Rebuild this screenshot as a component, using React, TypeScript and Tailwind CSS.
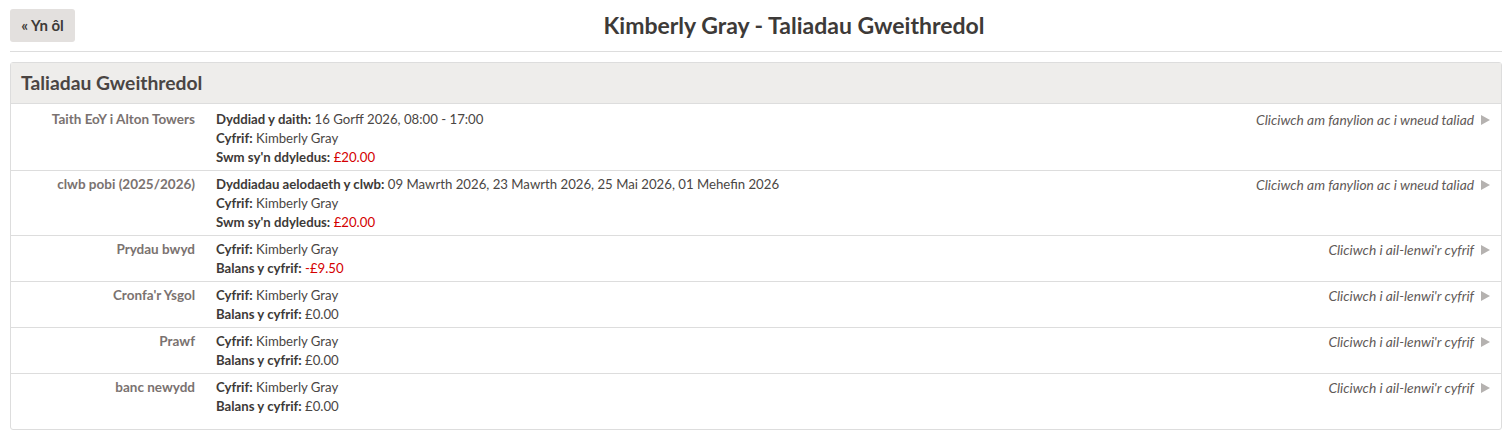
const rows = [
  {
    name: 'Taith EoY i Alton Towers',
    lines: [
      { label: 'Dyddiad y daith:', value: '16 Gorff 2026, 08:00 - 17:00' },
      { label: 'Cyfrif:', value: 'Kimberly Gray' },
      { label: "Swm sy'n ddyledus:", value: '£20.00', red: true },
    ],
    action: 'Cliciwch am fanylion ac i wneud taliad',
  },
  {
    name: 'clwb pobi (2025/2026)',
    lines: [
      {
        label: 'Dyddiadau aelodaeth y clwb:',
        value: '09 Mawrth 2026, 23 Mawrth 2026, 25 Mai 2026, 01 Mehefin 2026',
      },
      { label: 'Cyfrif:', value: 'Kimberly Gray' },
      { label: "Swm sy'n ddyledus:", value: '£20.00', red: true },
    ],
    action: 'Cliciwch am fanylion ac i wneud taliad',
  },
  {
    name: 'Prydau bwyd',
    lines: [
      { label: 'Cyfrif:', value: 'Kimberly Gray' },
      { label: 'Balans y cyfrif:', value: '-£9.50', red: true },
    ],
    action: "Cliciwch i ail-lenwi'r cyfrif",
  },
  {
    name: "Cronfa'r Ysgol",
    lines: [
      { label: 'Cyfrif:', value: 'Kimberly Gray' },
      { label: 'Balans y cyfrif:', value: '£0.00' },
    ],
    action: "Cliciwch i ail-lenwi'r cyfrif",
  },
  {
    name: 'Prawf',
    lines: [
      { label: 'Cyfrif:', value: 'Kimberly Gray' },
      { label: 'Balans y cyfrif:', value: '£0.00' },
    ],
    action: "Cliciwch i ail-lenwi'r cyfrif",
  },
  {
    name: 'banc newydd',
    lines: [
      { label: 'Cyfrif:', value: 'Kimberly Gray' },
      { label: 'Balans y cyfrif:', value: '£0.00' },
    ],
    action: "Cliciwch i ail-lenwi'r cyfrif",
  },
]

export default function App() {
  return (
    <div className="min-h-screen bg-white px-[10px] pt-[9px] text-[#433f3d] font-['Lato',sans-serif]">
      {/* Header */}
      <div className="flex items-center h-[33px]">
        <button className="h-[33px] w-[65px] shrink-0 rounded-[3px] bg-[#e3e0de] text-[15px] font-bold text-[#3d3a38]">
          « Yn ôl
        </button>
        <h1 className="flex-1 ml-[11px] text-center text-[23px] font-bold text-[#3d3a38] leading-none">
          Kimberly Gray - Taliadau Gweithredol
        </h1>
      </div>
      <hr className="mt-[9px] border-t border-[#dddddd]" />

      {/* Panel */}
      <div className="mt-[10px] border border-[#dddddd] rounded-[3px] pb-[10px]">
        <div className="bg-[#eeedeb] h-[41px] flex items-center px-[10px] border-b border-[#dddddd]">
          <h2 className="text-[19.3px] font-bold text-[#4a4543]">Taliadau Gweithredol</h2>
        </div>
        {rows.map((row, i) => (
          <div
            key={row.name}
            className={`flex pb-[3px] text-[13.2px] leading-[19px] ${i === 0 ? 'pt-[6px]' : 'pt-[4px]'} ${
              i < rows.length - 1 ? 'border-b border-[#dddddd]' : ''
            }`}
          >
            <div className="w-[184px] shrink-0 text-right font-bold text-[13.5px] text-[#7a7270]">{row.name}</div>
            <div className="flex-1 pl-[21px]">
              {row.lines.map((l) => (
                <div key={l.label}>
                  <span className="font-bold text-[#3d3a38]">{l.label}</span>{' '}
                  <span className={l.red ? 'text-[#d40000]' : 'text-[#4a4644]'}>{l.value}</span>
                </div>
              ))}
            </div>
            <div className="flex items-start pr-[11px] italic text-[13.8px] text-[#5f5a58]">
              <span>{row.action}</span>
              <svg width="9" height="10" viewBox="0 0 9 10" className="ml-[7px] mt-[5px]">
                <path d="M0 0 L9 5 L0 10 Z" fill="#b5b2b0" />
              </svg>
            </div>
          </div>
        ))}
      </div>
    </div>
  )
}
